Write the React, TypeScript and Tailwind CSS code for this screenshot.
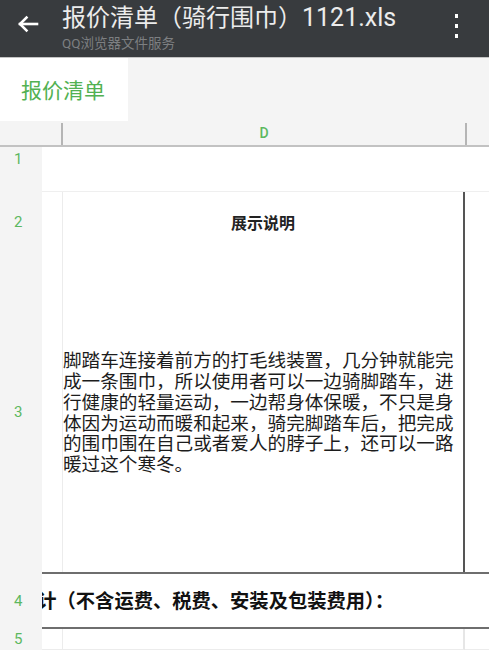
const cjk = { fontFamily: '"Noto Sans CJK SC", "Noto Sans", sans-serif' };
const num = { fontFamily: 'Roboto, "Noto Sans", sans-serif' };

function RowLabel({ n }: { n: string }) {
  return (
    <span className="text-[15px] text-[#5cb860]" style={num}>
      {n}
    </span>
  );
}

export default function App() {
  const para =
    "脚踏车连接着前方的打毛线装置，几分钟就能完成一条围巾，所以使用者可以一边骑脚踏车，进行健康的轻量运动，一边帮身体保暖，不只是身体因为运动而暖和起来，骑完脚踏车后，把完成的围巾围在自己或者爱人的脖子上，还可以一路暖过这个寒冬。";

  return (
    <div className="w-[489px] h-[650px] overflow-hidden bg-white flex flex-col" style={cjk}>
      {/* top bar */}
      <div className="h-[58px] shrink-0 bg-[#383b3e] border-b border-[#c4c4c4] flex items-start">
        <div className="w-[62px] h-full flex items-center justify-center pb-[9px] pr-[6px]">
          <svg width="22" height="18" viewBox="0 0 22 18" fill="none" stroke="#ffffff" strokeWidth="2.6" strokeLinecap="square">
            <path d="M3 9h17" />
            <path d="M9.5 2.5L3 9l6.5 6.5" />
          </svg>
        </div>
        <div className="flex-1 flex flex-col">
          <div className="text-[24px] leading-[32px] text-[#ececec] whitespace-nowrap">
            报价清单（骑行围巾）<span className="text-[25px]" style={num}>1121.xls</span>
          </div>
          <div className="text-[13.5px] leading-[16px] text-[#7d7f81] whitespace-nowrap">
            <span style={num}>QQ</span>浏览器文件服务
          </div>
        </div>
        <div className="w-[66px] h-full flex flex-col items-center gap-[6px] pt-[14px]">
          <span className="w-[3px] h-[4px] bg-white" />
          <span className="w-[3px] h-[4px] bg-white" />
          <span className="w-[3px] h-[4px] bg-white" />
        </div>
      </div>

      {/* sheet tabs */}
      <div className="h-[64px] shrink-0 bg-[#f4f4f4] flex items-start">
        <div className="w-[128px] h-[63px] bg-white flex items-center pl-[21px]">
          <span className="text-[21px] text-[#52b152]">报价清单</span>
        </div>
      </div>

      {/* column header */}
      <div className="h-[25px] shrink-0 bg-[#f4f4f4] border-b-2 border-[#c2c2c2] flex">
        <div className="w-[63px] border-r-2 border-[#b5b5b5] mt-[1px]" />
        <div className="w-[402px] flex items-center justify-center text-[14px] font-medium text-[#5cb860]" style={num}>
          D
        </div>
        <div className="flex-1 border-l-2 border-[#b5b5b5] mt-[1px]" />
      </div>

      {/* row 1 */}
      <div className="h-[45px] shrink-0 flex">
        <div className="w-[42px] bg-[#f4f4f4] flex pl-[14px] pt-[3px] leading-[18px]">
          <RowLabel n="1" />
        </div>
        <div className="flex-1 border-b border-[#efefef]" />
      </div>

      {/* rows 2-3 merged */}
      <div className="h-[380px] shrink-0 flex">
        <div className="w-[42px] bg-[#f4f4f4] flex flex-col pl-[14px]">
          <div className="h-[61px] flex items-center"><RowLabel n="2" /></div>
          <div className="flex-1 flex items-center"><RowLabel n="3" /></div>
        </div>
        <div className="w-[21px] border-r border-[#ececec]" />
        <div className="w-[402px] border-r-2 border-[#555555] flex flex-col">
          <div className="h-[60px] flex items-center justify-center text-[16px] font-bold text-[#222222]">
            展示说明
          </div>
          <div className="flex-1 flex items-center pb-[1px]">
            <p className="w-[396px] text-[18.6px] leading-[20.8px] text-[#1c1c1c]">{para}</p>
          </div>
        </div>
        <div className="flex-1" />
      </div>

      {/* row 4 */}
      <div className="h-[57px] shrink-0 flex">
        <div className="w-[42px] bg-[#f4f4f4] flex items-center pl-[14px] pt-[2px] relative z-10">
          <RowLabel n="4" />
        </div>
        <div className="flex-1 border-y-2 border-[#6e6e6e] flex items-center overflow-hidden">
          <span className="-ml-[24px] whitespace-nowrap text-[19.3px] font-bold text-[#111111]">
            合计（不含运费、税费、安装及包装费用）：
          </span>
        </div>
      </div>

      {/* row 5 */}
      <div className="h-[21px] shrink-0 flex">
        <div className="w-[42px] bg-[#f4f4f4] flex items-center pl-[14px]">
          <RowLabel n="5" />
        </div>
        <div className="w-[21px] border-r border-[#ececec] border-b" />
        <div className="w-[402px] border-r-2 border-[#e6e6e6] border-b border-b-[#ececec]" />
        <div className="flex-1 border-b border-[#ececec]" />
      </div>
    </div>
  );
}
